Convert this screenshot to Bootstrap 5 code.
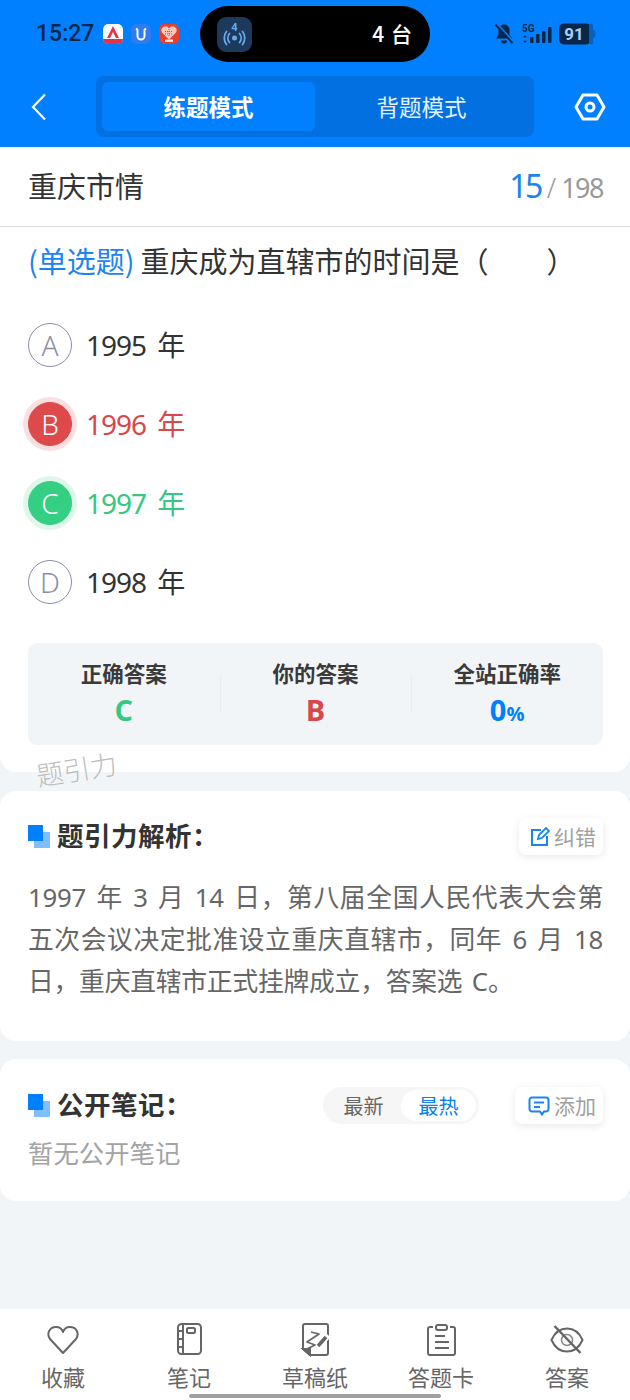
<!DOCTYPE html>
<html lang="zh-CN">

<head>
    <meta charset="UTF-8">
    <meta name="viewport" content="width=device-width, initial-scale=1">
    <title>重庆市情</title>
    <link href="https://cdn.jsdelivr.net/npm/bootstrap@5.3.0/dist/css/bootstrap.min.css" rel="stylesheet">
    <style>
        body { font-family: "Noto Sans", "Noto Sans CJK SC", sans-serif; background: #f2f5f8; color: #333; }
        .page-wrap { height: 1400px; position: relative; overflow: hidden; }
        .top-head { background: #007fff; height: 147px; flex: none; }
        .status-row { height: 56px; margin-top: 6px; padding-left: 36px; padding-right: 34px; }
        .clock { font-family: Roboto, sans-serif; font-weight: 500; font-size: 23px; color: #0a2748; width: 67px; }
        .app-ico { width: 20px; height: 20px; border-radius: 5px; margin-right: 8px; display: block; }
        .island { width: 230px; height: 56px; background: #000; border-radius: 28px; margin-left: 13px; padding: 0 18px 0 17px; color: #fff; font-family: "Noto Sans CJK SC", sans-serif; font-size: 21px; font-weight: 500; word-spacing: 2px; }
        .island-ico { width: 35px; height: 35px; border-radius: 9px; background: #1d3a5c; display: block; }
        .nav-row { height: 85px; padding: 4px 24px 0 28px; }
        .mode-switch { width: 438px; height: 61px; margin-left: 46px; margin-right: 40px; padding: 6px; background: #0270e0; border-radius: 8px; font-size: 22.500px; font-family: "Noto Sans CJK SC", sans-serif; color: #e4f1ff; }
        .mode-tab { flex: 0 0 213px; border-radius: 6px; }
        .mode-tab.is-on { background: #007fff; color: #fff; font-weight: 700; }
        .title-row { height: 80px; background: #fff; border-bottom: 1px solid #ddd; padding: 0 27px 2px 28px; flex: none; }
        .title-text { font-size: 29px; font-family: "Noto Sans CJK SC", sans-serif; }
        .num-now { font-size: 32px; color: #1a85f0; letter-spacing: -2.500px; }
        .num-slash { font-size: 27px; color: #999; margin: 0 5px 0 6px; font-weight: 300; }
        .num-all { font-size: 27px; color: #999; letter-spacing: -1.500px; }
        .quiz-card { background: #fff; border-radius: 0 0 16px 16px; padding: 12px 27px 27px 28px; height: 545px; flex: none; }
        .quiz-line { font-size: 29px; line-height: 42px; font-family: "Noto Sans CJK SC", sans-serif; white-space: nowrap; }
        .quiz-type { color: #1a85f0; margin-right: 6px; }
        .opt-row { height: 79px; font-size: 28px; letter-spacing: -1px; word-spacing: 5px; }
        .opt-list { margin-top: 24px; margin-bottom: 22px; }
        .opt-ball { width: 44px; height: 44px; border-radius: 50%; border: 1px solid #8b8fa8; color: #8b8fa8; font-size: 28px; font-weight: 300; margin-right: 14px; flex: none; letter-spacing: 0; }
        .opt-wrong { color: #d8474a; }
        .opt-wrong .opt-ball { background: #de4a4c; border-color: #de4a4c; color: #fff; box-shadow: 0 0 0 5px #f9dfe0; }
        .opt-right { color: #34c880; }
        .opt-right .opt-ball { background: #34cf82; border-color: #34cf82; color: #fff; box-shadow: 0 0 0 5px #dff7ea; }
        .stat-box { background: #f2f5f8; border-radius: 9px; height: 102px; }
        .stat-cell { flex: 1; text-align: center; padding-top: 15px; position: relative; }
        .stat-cell + .stat-cell::before { content: ""; position: absolute; left: 0; top: 32px; height: 38px; width: 1px; background: #e9ecf0; }
        .stat-label { font-size: 21.500px; line-height: 30px; font-weight: 700; font-family: "Noto Sans CJK SC", sans-serif; color: #3a3a3a; }
        .stat-val { font-size: 29px; line-height: 42px; margin-top: 1px; font-weight: 700; font-family: "Open Sans", sans-serif; }
        .stat-val small { font-size: 20px; }
        .stat-blue { color: #007fff; }
        .watermark { position: absolute; left: 36px; top: 750px; font-size: 27px; color: #bdbdbd; font-family: "Noto Sans CJK SC", sans-serif; font-weight: 300; transform: rotate(-9deg); line-height: 38px; }
        .info-card { background: #fff; border-radius: 16px; padding: 0 27px 0 28px; flex: none; }
        .card-jiexi { margin-top: 19px; height: 250px; padding-top: 27px; }
        .card-biji { margin-top: 18px; height: 142px; padding-top: 28px; }
        .head-row { height: 37px; }
        .blocks { width: 22px; height: 23px; position: relative; margin-right: 7px; flex: none; }
        .blocks::before { content: ""; position: absolute; right: 0; bottom: 0; width: 16px; height: 16px; background: #7fbfff; }
        .blocks::after { content: ""; position: absolute; left: 0; top: 0; width: 15px; height: 16px; background: #007fff; }
        .head-text { font-size: 26.500px; letter-spacing: .5px; font-weight: 700; font-family: "Noto Sans CJK SC", sans-serif; color: #333; padding-bottom: 4px; }
        .mini-btn { height: 37px; background: #fff; border-radius: 7px; box-shadow: 0 2px 8px rgba(0,0,0,.09); font-size: 21px; font-family: "Noto Sans CJK SC", sans-serif; color: #a0a0a0; padding: 0 7px 0 11px; gap: 4px; }
        .mini-add { padding-left: 13px; }
        .jiexi-text { font-size: 25.750px; line-height: 42px; color: #666; margin-top: 21px; text-align: justify; letter-spacing: -.2px; word-spacing: 3px; }
        .sort-pill { width: 156px; height: 37px; border-radius: 19px; background: #f6f6f6; padding: 3px; margin-right: 36px; font-size: 20px; font-family: "Noto Sans CJK SC", sans-serif; color: #666; }
        .sort-pill span { flex: 1; text-align: center; line-height: 31px; border-radius: 16px; }
        .sort-pill .is-on { background: #fff; color: #0b80e8; }
        .empty-note { font-size: 25.400px; line-height: 36px; color: #a3a3a3; margin-top: 10px; font-family: "Noto Sans CJK SC", sans-serif; }
        .bottom-bar { position: absolute; left: 0; right: 0; bottom: 0; height: 91px; background: #fff; }
        .bar-item { flex: 1; text-align: center; color: #666; font-size: 22px; font-family: "Noto Sans CJK SC", sans-serif; padding-top: 14px; }
        .bar-item svg { display: block; margin: 0 auto; }
        .bar-item div { line-height: 30px; margin-top: 4px; }
        .home-line { position: absolute; left: 189px; bottom: 2px; width: 252px; height: 4px; border-radius: 2px; background: #a0a0a0; }
    </style>
</head>

<body>
    <div class="page-wrap d-flex flex-column">
        <div class="top-head">
            <div class="status-row d-flex align-items-center">
                <div class="clock">15:27</div>
                <svg class="app-ico" viewBox="0 0 20 20"><rect width="20" height="20" rx="5" fill="#fff"/><path d="M0 15h20v1a4 4 0 0 1-4 4H4a4 4 0 0 1-4-4z" fill="#e4324a"/><path d="M10 2 4 14h3l3-6 3 6h3z" fill="#e4324a"/></svg>
                <svg class="app-ico" viewBox="0 0 20 20"><rect width="20" height="20" rx="5" fill="#2f7bf0"/><path d="M6.500 6v6a3.500 3.500 0 0 0 7 0V6M5 4.500l2 1.500M15 4.500l-2 1.500" fill="none" stroke="#fff" stroke-width="2"/></svg>
                <svg class="app-ico" viewBox="0 0 20 20"><rect width="20" height="20" rx="5" fill="#e8402f"/><path d="M10 15.500 3 8.500A3.800 3.800 0 0 1 10 4.500 3.800 3.800 0 0 1 17 8.500z" fill="#f6c9bd"/><path d="M6 7.500h8M6 10h8M10 5v8" stroke="#e8402f" stroke-width="1" stroke-dasharray="1 1"/><rect x="6" y="15.500" width="8" height="2.500" fill="#fbe3dc"/></svg>
                <div class="island d-flex align-items-center justify-content-between">
                    <svg class="island-ico" viewBox="0 0 35 35">
                        <text x="17.500" y="14" text-anchor="middle" font-size="11" font-weight="700" fill="#6aa8ee" font-family="Roboto">4</text>
                        <circle cx="17.500" cy="21" r="2.500" fill="#6aa8ee"/>
                        <g fill="none" stroke="#6aa8ee" stroke-width="1.800" stroke-linecap="round"><path d="M12.500 16.500a7 7 0 0 0 0 9M22.500 16.500a7 7 0 0 1 0 9M9.500 14.500a10.500 10.500 0 0 0 0 13M25.500 14.500a10.500 10.500 0 0 1 0 13"/></g>
                    </svg>
                    <span>4 台</span>
                </div>
                <div class="d-flex align-items-center ms-auto">
                    <svg width="20" height="22" viewBox="0 0 20 22"><path d="M10 1.500c-3.500 0-5.500 2.500-5.500 6v4L2 15.500h16l-2.500-4v-4c0-3.500-2-6-5.500-6z" fill="#0a2748"/><path d="M7 17.500a3 3 0 0 0 6 0z" fill="#0a2748"/><path d="M1.500 1.500 18.500 20" stroke="#0a2748" stroke-width="2"/><path d="M3 0.500 20 19" stroke="#007fff" stroke-width="1.500"/></svg>
                    <svg width="33" height="22" viewBox="0 0 33 22" class="ms-2"><text x="0" y="9" font-size="10" font-weight="700" font-family="Roboto" fill="#0a2748">5G</text><path d="M3 12l2 2.200H1zM3 20l2-2.200H1z" fill="#0a2748"/><rect x="8" y="14" width="3.500" height="6" rx="1" fill="#0a2748"/><rect x="14" y="11" width="3.500" height="9" rx="1" fill="#0a2748"/><rect x="20" y="8" width="3.500" height="12" rx="1" fill="#0a2748"/><rect x="26" y="4" width="3.500" height="16" rx="1" fill="#0a2748"/></svg>
                    <svg width="37" height="22" viewBox="0 0 37 22" class="ms-1"><rect x="0" y="0.500" width="32" height="21" rx="5" fill="#0a2748"/><rect x="30" y="0.500" width="4" height="21" rx="2" fill="#0a5fb8"/><path d="M34 7c2 .5 2.500 2 2.500 4s-.5 3.500-2.500 4z" fill="#0a5fb8"/><text x="15" y="17" text-anchor="middle" font-size="17" font-weight="700" font-family="Roboto" fill="#a8cff5">91</text></svg>
                </div>
            </div>
            <div class="nav-row d-flex align-items-center">
                <svg width="22" height="28" viewBox="0 0 22 28"><path d="M17 1.500 5 14l12 12.500" fill="none" stroke="#fff" stroke-width="2.200"/></svg>
                <div class="mode-switch d-flex">
                    <div class="mode-tab is-on d-flex align-items-center justify-content-center">练题模式</div>
                    <div class="mode-tab d-flex align-items-center justify-content-center">背题模式</div>
                </div>
                <svg width="32" height="28" viewBox="0 0 32 28"><path d="M9 2h14l7 12-7 12H9L2 14z" fill="none" stroke="#fff" stroke-width="3" stroke-linejoin="round"/><circle cx="16" cy="14" r="4" fill="none" stroke="#fff" stroke-width="3"/></svg>
            </div>
        </div>

        <div class="title-row d-flex align-items-center justify-content-between">
            <div class="title-text">重庆市情</div>
            <div class="d-flex align-items-baseline"><span class="num-now">15</span><span class="num-slash">/</span><span class="num-all">198</span></div>
        </div>

        <div class="quiz-card">
            <div class="quiz-line"><span class="quiz-type">(单选题)</span>重庆成为直辖市的时间是（&emsp;&emsp;）</div>
            <div class="opt-list">
                <div class="opt-row d-flex align-items-center"><span class="opt-ball d-flex align-items-center justify-content-center">A</span><span>1995 年</span></div>
                <div class="opt-row opt-wrong d-flex align-items-center"><span class="opt-ball d-flex align-items-center justify-content-center">B</span><span>1996 年</span></div>
                <div class="opt-row opt-right d-flex align-items-center"><span class="opt-ball d-flex align-items-center justify-content-center">C</span><span>1997 年</span></div>
                <div class="opt-row d-flex align-items-center"><span class="opt-ball d-flex align-items-center justify-content-center">D</span><span>1998 年</span></div>
            </div>
            <div class="stat-box d-flex">
                <div class="stat-cell"><div class="stat-label">正确答案</div><div class="stat-val opt-right">C</div></div>
                <div class="stat-cell"><div class="stat-label">你的答案</div><div class="stat-val opt-wrong">B</div></div>
                <div class="stat-cell"><div class="stat-label">全站正确率</div><div class="stat-val stat-blue">0<small>%</small></div></div>
            </div>
        </div>
        <div class="watermark">题引力</div>

        <div class="info-card card-jiexi">
            <div class="head-row d-flex align-items-center">
                <span class="blocks"></span>
                <span class="head-text">题引力解析：</span>
                <div class="mini-btn d-flex align-items-center ms-auto">
                    <svg width="20" height="20" viewBox="0 0 20 20" fill="none" stroke="#1a85f0" stroke-width="2"><path d="M11 3H2v15h15V9"/><path d="M8 12l1-4 7-7 3 3-7 7z" stroke-width="1.800"/></svg>
                    <span>纠错</span>
                </div>
            </div>
            <div class="jiexi-text">1997 年 3 月 14 日，第八届全国人民代表大会第<wbr>五次会议决定批准设立重庆直辖市，同年 6 月 18 日，重庆直辖市正式挂牌成立，答案选 C。</div>
        </div>

        <div class="info-card card-biji">
            <div class="head-row d-flex align-items-center">
                <span class="blocks"></span>
                <span class="head-text">公开笔记：</span>
                <div class="sort-pill d-flex ms-auto"><span>最新</span><span class="is-on">最热</span></div>
                <div class="mini-btn mini-add d-flex align-items-center">
                    <svg width="22" height="20" viewBox="0 0 22 20" fill="none" stroke="#1a85f0" stroke-width="2"><path d="M4 1.500h14a2.500 2.500 0 0 1 2.500 2.500v9a2.500 2.500 0 0 1-2.500 2.500h-2l-2 3-2-3H4A2.500 2.500 0 0 1 1.500 13V4A2.500 2.500 0 0 1 4 1.500z"/><path d="M6 6.500h10M6 11h6"/></svg>
                    <span>添加</span>
                </div>
            </div>
            <div class="empty-note">暂无公开笔记</div>
        </div>

        <div class="bottom-bar d-flex">
            <div class="bar-item">
                <svg width="34" height="34" viewBox="0 0 34 34" fill="none" stroke="#666" stroke-width="2"><path d="M17 30 4 16C0 10 4 4 10 4c3 0 6 2 7 5 1-3 4-5 7-5 6 0 10 6 6 12z" stroke-linejoin="round"/></svg>
                <div>收藏</div>
            </div>
            <div class="bar-item">
                <svg width="34" height="34" viewBox="0 0 34 34" fill="none" stroke="#666" stroke-width="2"><rect x="6" y="1" width="23" height="30" rx="3.500"/><path d="M11 1v30M6 8h5M6 16h5M6 24h5"/><rect x="15" y="5" width="8" height="5" rx="1.500"/></svg>
                <div>笔记</div>
            </div>
            <div class="bar-item">
                <svg width="34" height="34" viewBox="0 0 34 34" fill="none" stroke="#666" stroke-width="2"><path d="M12 32h16a2 2 0 0 0 2-2V3a2 2 0 0 0-2-2H7a2 2 0 0 0-2 2v23z" stroke-linejoin="round"/><path d="M5 26h7v6z" fill="#666"/><path d="M13 9l8 2-12 8 8 3-8 4" stroke-width="1.800" stroke-linejoin="round"/><path d="M20 23l10-11" stroke="#fff" stroke-width="7"/><path d="M20 23l8-9" stroke-width="3.500"/></svg>
                <div>草稿纸</div>
            </div>
            <div class="bar-item">
                <svg width="34" height="34" viewBox="0 0 34 34" fill="none" stroke="#666" stroke-width="2"><path d="M9 4H6a2 2 0 0 0-2 2v24a2 2 0 0 0 2 2h23a2 2 0 0 0 2-2V6a2 2 0 0 0-2-2h-3"/><rect x="12" y="2" width="11" height="5" rx="2"/><path d="M11 13h10M11 19h14M11 25h14"/></svg>
                <div>答题卡</div>
            </div>
            <div class="bar-item">
                <svg width="34" height="34" viewBox="0 0 34 34" fill="none" stroke="#666" stroke-width="2"><path d="M1.500 17C5 9 10.500 5.500 17 5.500S29 9 32.500 17C29 25 23.500 28.500 17 28.500S5 25 1.500 17z"/><circle cx="17" cy="17" r="5.500" stroke-width="1.500" stroke="#888"/><path d="M4.500 3l26 27" stroke-width="2.500"/></svg>
                <div>答案</div>
            </div>
            <div class="home-line"></div>
        </div>
    </div>
</body>

</html>
